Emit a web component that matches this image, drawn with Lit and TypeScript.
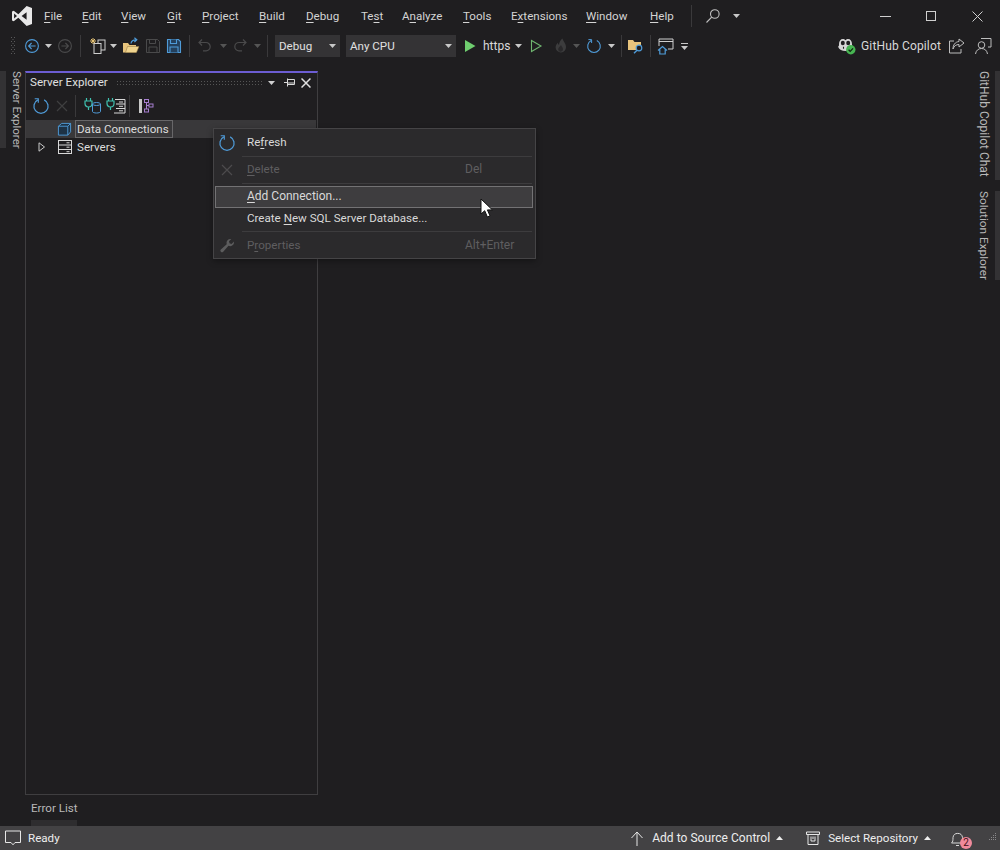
import { LitElement, html, svg, css } from "lit";
import { customElement } from "lit/decorators.js";

const refresh = (s = 18, c = "#4f9bd8") => html`<svg width=${s} height=${s} viewBox="0 0 16 16" fill="none" stroke=${c} stroke-width="1.1"><path d="M5.2 2.6A6.3 6.3 0 1 0 10.8 2.6"/><path d="M2.4 1.6h3.2v3.4" stroke-width="1"/></svg>`;
const cross = (c: string) => html`<svg width="14" height="14" viewBox="0 0 14 14" fill="none" stroke=${c} stroke-width="1.2"><path d="M2 2l10 10M12 2L2 12"/></svg>`;
const caret = (c = "#c8c8c8") => html`<svg width="7" height="4" viewBox="0 0 7 4"><path d="M0 0h7L3.5 4z" fill=${c}/></svg>`;
const plug = svg`<g stroke="#3fc1b0" stroke-width="1.2" fill="none"><path d="M2.500 1v3M6.500 1v3M1 4h7v2.500a3.500 3.500 0 0 1-7 0zM4.500 10v3"/></g>`;

const back = html`<svg width="16" height="16" viewBox="0 0 16 16" fill="none" stroke="#4f9bd8" stroke-width="1.1"><circle cx="8" cy="8" r="6.4"/><path d="M11.6 8H4.8M7.6 5 4.6 8l3 3"/></svg>`;
const fwd = html`<svg width="16" height="16" viewBox="0 0 16 16" fill="none" stroke="#4a4a4b" stroke-width="1.1"><circle cx="8" cy="8" r="6.4"/><path d="M4.4 8h6.8M8.4 5l3 3-3 3"/></svg>`;
const newProj = html`<svg width="18" height="18" viewBox="0 0 18 18" fill="none"><path d="M4 1v6M1 4h6M2 2l4 4M6 2 2 6" stroke="#e5c274" stroke-width="1"/><rect x="9" y="3" width="7" height="10" stroke="#cfcfcf" fill="#1f1e20"/><rect x="5" y="6.5" width="7" height="10" stroke="#cfcfcf" fill="#1f1e20"/></svg>`;
const openF = html`<svg width="18" height="18" viewBox="0 0 18 18"><path d="M1 6h5l1.5 2H14v7.5H1z" fill="#e8c47c"/><path d="M3.5 15.5 5.5 9.500H17l-2.500 6z" fill="#f0d48e" stroke="#8b7340" stroke-width=".5"/><path d="M9 6.500c.3-2.500 2.300-3.600 5-3.600M12.400 .8l2.400 2-2.400 2.200" fill="none" stroke="#4f9bd8" stroke-width="1.200"/></svg>`;
const save = (c: string) => html`<svg width="16" height="16" viewBox="0 0 16 16" fill="none" stroke=${c} stroke-width="1"><path d="M1.500 1.500h11l2 2v11h-13z"/><path d="M4.500 1.500v4h6v-4M4 14.500V9h8v5.500"/></svg>`;
const saveAll = html`<svg width="16" height="16" viewBox="0 0 16 16" fill="#24405c" stroke="#4f9bd8" stroke-width="1.100"><path d="M1.500 1.500h11l2 2v11h-13z"/><path d="M4.500 1.500v4h6v-4M4 14.500V9h8v5.500"/></svg>`;
const undo = html`<svg width="16" height="16" viewBox="0 0 16 16" fill="none" stroke="#4a4a4b" stroke-width="1.200"><path d="M5 1.500 2 4.500l3 3M2 4.500h7a4.200 4.200 0 0 1 0 8.400H6"/></svg>`;
const redo = html`<svg width="16" height="16" viewBox="0 0 16 16" fill="none" stroke="#4a4a4b" stroke-width="1.200"><path d="m11 1.500 3 3-3 3M14 4.500H7a4.200 4.200 0 0 0 0 8.400h3"/></svg>`;
const play = html`<svg width="14" height="14" viewBox="0 0 14 14"><path d="M2 1v12l10.500-6z" fill="#6fce6f"/></svg>`;
const playO = html`<svg width="14" height="14" viewBox="0 0 14 14"><path d="M2.500 1.500v11l9.500-5.500z" fill="none" stroke="#6fb56f" stroke-width="1.100"/></svg>`;
const flame = html`<svg width="16" height="16" viewBox="0 0 16 16"><path d="M9.500.5c.6 3 3.500 4.600 3.500 8.500a5.200 5.200 0 0 1-10.400.5c0-2.200 1.200-3.500 2.200-4.700.2 1 .5 1.700 1.200 2.200C6 4.500 7.400 2 9.500.5z" fill="#3c3c3d"/><path d="M8 7c.4 1.500 2 2.400 2 4.200a2.400 2.400 0 0 1-4.800.2c0-1.200.8-2 1.400-2.600C7 8.200 7.500 7.600 8 7z" fill="#29282a"/></svg>`;
const folderFind = html`<svg width="18" height="18" viewBox="0 0 18 18"><path d="M1 3h5l1.500 2H14v8H1z" fill="#e8c47c"/><circle cx="12" cy="11" r="2.800" fill="#1f1e20" stroke="#4f9bd8" stroke-width="1.200"/><path d="m10 13.200-3 3" stroke="#4f9bd8" stroke-width="1.500"/></svg>`;
const winHome = html`<svg width="18" height="18" viewBox="0 0 18 18" fill="none"><path d="M2 9V2h14v10h-5M2 4.500h14" stroke="#cfcfcf"/><path d="M1 13.500 5.500 9.500l4.500 4M2.800 12.500v4.500h5.400v-4.500" stroke="#4f9bd8" stroke-width="1.200"/></svg>`;
const copilot = html`<svg width="18" height="18" viewBox="0 0 18 18"><path d="M1 7c0-3 1.700-5 3.800-5 1.200 0 1.900.5 2.700 1.200C8.300 2.500 9 2 10.200 2 12.300 2 14 4 14 7v1.500c.6.500.8 1 .8 1.500-1 2.400-3.800 4-7.300 4S1.200 12.400.2 10c0-.5.2-1 .8-1.500z" fill="#d6d6d6"/><ellipse cx="4.800" cy="6" rx="2" ry="2.300" fill="#1f1e20"/><ellipse cx="10.200" cy="6" rx="2" ry="2.300" fill="#1f1e20"/><path d="M5.500 9.800v2M9.500 9.800v2" stroke="#1f1e20" stroke-width="1.100"/><circle cx="12.800" cy="12.800" r="4.700" fill="#47b552"/><path d="m10.600 12.800 1.600 1.600 2.800-3" fill="none" stroke="#10280f" stroke-width="1.300"/></svg>`;
const share = html`<svg width="18" height="18" viewBox="0 0 18 18" fill="none" stroke="#bdbdbd" stroke-width="1"><path d="M6 4H1.500v12H13v-4"/><path d="M11 2l5 4-5 4V7.500C8 7.500 6 9 5 12c0-4 2-7 6-7.500z"/></svg>`;
const feedback = html`<svg width="18" height="18" viewBox="0 0 18 18" fill="none" stroke="#bdbdbd" stroke-width="1"><path d="M7 1.500h10V10h-3"/><circle cx="7.500" cy="8" r="3.300"/><path d="M1.500 17c.5-3.500 2.800-5.500 6-5.500s5.500 2 6 5.500"/></svg>`;
const search = html`<svg width="16" height="16" viewBox="0 0 16 16" fill="none" stroke="#c0c0c0" stroke-width="1.100"><circle cx="9.800" cy="6" r="4.300"/><path d="M6.700 9.200 1.500 14.500"/></svg>`;
const pin = html`<svg width="11" height="9" viewBox="0 0 11 9" fill="none" stroke="#d8d8d8" stroke-width="1"><path d="M0 4.500h3.500M3.500.5v8M3.500 1.500h7v5h-7M3.500 5h7"/></svg>`;
const addData = html`<svg width="18" height="18" viewBox="0 0 18 18">${plug}<g fill="none" stroke="#4f9bd8" stroke-width="1"><ellipse cx="12.500" cy="7" rx="4" ry="1.500"/><path d="M8.500 7v7.500c0 .9 1.800 1.500 4 1.500s4-.6 4-1.500V7"/></g></svg>`;
const addServer = html`<svg width="20" height="18" viewBox="0 0 20 18">${plug}<g fill="none" stroke="#d8d8d8" stroke-width="1"><path d="M9 2.500h10v13.500H8M10 7h9M10 11.500h9"/><path d="M13 5h4M13 9.300h4M13 13.800h4"/></g></svg>`;
const hierarchy = html`<svg width="16" height="16" viewBox="0 0 16 16"><rect x="1" y="1" width="3" height="14" fill="#c8c8c8"/><g fill="none" stroke="#a77fd0" stroke-width="1"><rect x="6.500" y="1.500" width="4" height="3"/><rect x="11" y="6" width="4" height="3"/><rect x="6.500" y="11" width="4" height="3"/><path d="M8.500 4.500V11M8.500 7.500H11"/></g></svg>`;
const dbIcon = html`<svg width="15" height="15" viewBox="0 0 16 16" fill="#1d3245" stroke="#4f9bd8" stroke-width="1"><path d="M1.500 4.500 5 1.500h9.500v9l-3 3.500h-10z"/><path d="M1.500 4.500h10V14M11.500 4.500l3-3" fill="none"/></svg>`;
const serverIcon = html`<svg width="14" height="14" viewBox="0 0 14 14" fill="none" stroke="#d8d8d8" stroke-width="1"><rect x=".5" y=".5" width="13" height="13"/><path d="M.5 5h13M.5 9.500h13M8.500 2.800h3M8.500 7.200h3M8.500 11.700h3"/></svg>`;
const expander = html`<svg width="8" height="10" viewBox="0 0 8 10"><path d="M1 .8v8.400L6.500 5z" fill="none" stroke="#c8c8c8"/></svg>`;
const wrench = html`<svg width="16" height="16" viewBox="0 0 16 16"><path d="M15 3.500a4 4 0 0 1-5.500 4.300L4 14a1.700 1.700 0 0 1-2.400-2.300L7.700 6.200A4 4 0 0 1 12.300 1L10 3.300l.5 2 2 .6z" fill="#5c5c5d"/></svg>`;
const bubble = html`<svg width="16" height="16" viewBox="0 0 16 16" fill="none" stroke="#e6e6e6" stroke-width="1"><path d="M.5 1h15v11.500H10L8 14.800 6 12.500H.5z"/></svg>`;
const up = html`<svg width="14" height="15" viewBox="0 0 14 15" fill="none" stroke="#e6e6e6" stroke-width="1"><path d="M7 1v14M1.500 7 7 1l5.500 6"/></svg>`;
const repo = html`<svg width="14" height="14" viewBox="0 0 14 14" fill="none" stroke="#e6e6e6" stroke-width="1"><path d="M.5 1h13v2.500H.5zM2 3.500v10h10v-10M5 5.500v4.500h4V5.500M7 5.500V8"/></svg>`;
const bell = html`<svg width="16" height="17" viewBox="0 0 16 17" fill="none" stroke="#d8d8d8" stroke-width="1"><path d="M1.500 13c1.500-1 1.500-3 1.500-5.500a4.800 4.800 0 0 1 9.500 0c0 2.500 0 4.500 1.500 5.500zM6 15.500h3"/></svg>`;
const cursor = html`<svg width="14" height="20" viewBox="0 0 14 20"><path d="M1 1v15l3.700-3.300L7.400 19l2.600-1.200-2.600-5.900h5z" fill="#fff" stroke="#111" stroke-width="1"/></svg>`;
const gripDots = html`<svg width="5" height="18" viewBox="0 0 5 18"><g fill="#5a5a5b"><rect y="0" width="1" height="1"/><rect x="3" y="0" width="1" height="1"/><rect x="1.500" y="2" width="1" height="1"/><rect y="4" width="1" height="1"/><rect x="3" y="4" width="1" height="1"/><rect x="1.500" y="6" width="1" height="1"/><rect y="8" width="1" height="1"/><rect x="3" y="8" width="1" height="1"/><rect x="1.500" y="10" width="1" height="1"/><rect y="12" width="1" height="1"/><rect x="3" y="12" width="1" height="1"/><rect x="1.500" y="14" width="1" height="1"/><rect y="16" width="1" height="1"/><rect x="3" y="16" width="1" height="1"/></g></svg>`;
const sizer = html`<svg width="10" height="10" viewBox="0 0 10 10"><g fill="#8a898b"><rect x="8" y="0" width="1" height="1"/><rect x="6" y="2" width="1" height="1"/><rect x="8" y="2" width="1" height="1"/><rect x="4" y="4" width="1" height="1"/><rect x="6" y="4" width="1" height="1"/><rect x="8" y="4" width="1" height="1"/><rect x="2" y="6" width="1" height="1"/><rect x="4" y="6" width="1" height="1"/><rect x="6" y="6" width="1" height="1"/><rect x="8" y="6" width="1" height="1"/></g></svg>`;

const menus: [string, string, string][] = [
  ["", "F", "ile"], ["", "E", "dit"], ["", "V", "iew"], ["", "G", "it"], ["", "P", "roject"], ["", "B", "uild"], ["", "D", "ebug"],
  ["Te", "s", "t"], ["A", "n", "alyze"], ["", "T", "ools"], ["E", "x", "tensions"], ["", "W", "indow"], ["", "H", "elp"],
];

@customElement("app-root")
export class AppRoot extends LitElement {
  static styles = css`
    :host { display: block; position: relative; width: 1000px; height: 850px; overflow: hidden; background: #1f1e20; color: #d9d9d9;
      font: 11.6px/16px Roboto, sans-serif; white-space: nowrap; }
    * { box-sizing: border-box; }
    svg { display: block; flex: none; }
    u { text-underline-offset: 2px; text-decoration-thickness: 1px; }
    .frame { display: flex; flex-direction: column; height: 850px; }

    .title { display: flex; align-items: center; height: 32px; flex: none; }
    .logo { width: 44px; padding-left: 12px; }
    .menus { display: grid; grid-template-columns: 38px 39px 46px 35px 57px 47px 55px 41px 61px 48px 75px 64px 26px; color: #d4d4d4; }
    .tsep { width: 1px; height: 22px; background: #3a393b; margin: 0 11px 0 15px; }
    .win { margin-left: auto; display: flex; }
    .win div { width: 46px; height: 32px; display: flex; align-items: center; justify-content: center; }

    .tools { display: flex; align-items: center; height: 28px; flex: none; padding-left: 11px; }
    .ib { width: 20px; height: 22px; display: flex; align-items: center; justify-content: center; }
    .cr { width: 10px; height: 22px; display: flex; align-items: center; justify-content: center; }
    .sep { width: 1px; height: 22px; background: #3a393b; }
    .combo { height: 22px; background: #343335; display: flex; align-items: center; justify-content: space-between; padding: 0 4px; color: #e0e0e0; }
    .c1 { width: 65px; } .c2 { width: 110px; }
    .https { width: 28px; font-size: 12px; }
    .m1 { margin-left: 1px; } .m2 { margin-left: 2px; } .m3 { margin-left: 3px; } .m4 { margin-left: 4px; } .m5 { margin-left: 5px; } .m6 { margin-left: 6px; } .m7 { margin-left: 7px; } .m8 { margin-left: 8px; }
    .right { margin-left: auto; display: flex; align-items: center; color: #d9d9d9; padding-right: 7px; }
    .right .t { margin: 0 6px 0 5px; font-size: 12px; letter-spacing: .15px; }

    .body { flex: 1; display: flex; min-height: 0; padding-top: 11px; }
    .lrail { width: 25px; flex: none; display: flex; align-items: flex-start; }
    .strip { width: 6px; background: #333234; }
    .vt { writing-mode: vertical-rl; color: #b8b8b8; line-height: 14px; white-space: nowrap; }
    .lrail .strip { height: 77px; }
    .lrail .vt { margin-left: 4px; height: 77px; }
    .lcol { width: 293px; flex: none; display: flex; flex-direction: column; }
    .panel { height: 724px; border: 1px solid #3f3e40; border-top: 2px solid #6c5dd3; display: flex; flex-direction: column; }
    .ptitle { height: 19px; display: flex; align-items: center; padding: 0 3px 0 4px; color: #e0e0e0; flex: none; }
    .ptitle span { padding-bottom: 2px; }
    .dots { flex: 1; height: 5px; margin: 0 0 0 8px; background-image: radial-gradient(#555 .6px, transparent .7px); background-size: 3px 3px; }
    .ptitle .ic { display: flex; align-items: center; justify-content: center; }
    .w18 { width: 18px; } .w16 { width: 16px; }
    .ptools { height: 28px; display: flex; align-items: center; padding: 0 0 1px 4px; flex: none; }
    .ptools .ib { width: 21px; }
    .row { height: 18px; display: flex; align-items: center; flex: none; color: #dcdcdc; }
    .row.sel { background: #39383a; margin-right: 1px; }
    .exp { width: 29px; padding-left: 12px; }
    .tic { width: 20px; display: flex; justify-content: center; }
    .tic.d { justify-content: flex-start; padding-left: 2px; }
    .box { border: 1px solid #686769; height: 18px; padding: 0 1px; display: flex; align-items: center; width: 98px; }
    .row .nm { padding-left: 2px; }
    .tabs { padding-left: 6px; flex: 1; display: flex; flex-direction: column; justify-content: flex-end; }
    .tab { width: 46px; color: #b8b8b8; white-space: nowrap; }
    .tab .txt { height: 24px; display: flex; align-items: center; }
    .tab .bar { height: 6px; background: #2e2d2f; }
    .doc { flex: 1; }
    .rrail { width: 23px; flex: none; display: flex; flex-direction: column; gap: 11px; align-items: stretch; font-size: 12px; }
    .rt { display: flex; justify-content: space-between; }
    .rt .strip { width: 5px; }
    .h1 { height: 109px; } .h2 { height: 89px; font-size: 11.8px; }

    .status { height: 24px; flex: none; background: #434244; display: flex; align-items: center; color: #eee; padding-left: 5px; }
    .status .rg { margin-left: auto; display: flex; align-items: center; padding-right: 3px; }
    .st { margin-left: 7px; }
    .st.a { margin-left: 8px; font-size: 12px; letter-spacing: .05px; }
    .st.b { margin-left: 8px; }
    .sc { margin: 0 0 0 4px; }
    .s2 { margin-left: 22px; }
    .bellw { position: relative; margin-left: 18px; margin-right: 21px; }
    .badge { position: absolute; left: 10px; top: 7px; width: 12px; height: 12px; border-radius: 50%; background: #f08a9b; color: #401018; font-size: 10px; line-height: 12px; text-align: center; }

    .ctx { position: absolute; left: 213px; top: 128px; width: 323px; height: 131px; background: #2b2a2c; border: 1px solid #454446; padding: 2px 1px; box-shadow: 0 2px 6px rgba(0,0,0,.35); }
    .mi { display: flex; align-items: center; height: 24px; position: relative; }
    .mi .mic { width: 32px; display: flex; justify-content: center; flex: none; padding-right: 8px; }
    .mi .lb { flex: 1; padding-bottom: 2px; }
    .mi .sh { width: 69px; flex: none; padding-bottom: 2px; font-size: 12px; }
    .dis { color: #5f5e60; }
    .msep { height: 1px; background: #3d3c3e; margin: 1px 2px 1px 27px; }
    .hl { height: 22px; background: #3e3d3f; border: 1px solid #737274; margin: 2px 1px 0 0; }
    .mi.hl .mic { width: 31px; }
    .mi.hl .lb { font-size: 12px; }
    .pl { height: 22px; }
    .mi.last { height: 25px; padding-top: 1px; }
    .cur { position: absolute; left: 480px; top: 198px; }
  `;

  render() {
    return html`<div class="frame">
      <div class="title">
        <div class="logo"><svg width="20" height="20" viewBox="0 0 24 24"><path d="M17.583.063l-10 9.750-5.500-4.250L0 6.563v10.875l2.083 1 5.500-4.250 10 9.750L24 21.500V2.500zM2.500 15V9l3.500 3zm15 1.500L11.500 12l6-4.500z" fill="#e8e8e8"/></svg></div>
        <div class="menus">${menus.map(([a, k, b]) => html`<span>${a}<u>${k}</u>${b}</span>`)}</div>
        <div class="tsep"></div>
        <div class="ib">${search}</div><div class="cr m8">${caret()}</div>
        <div class="win">
          <div><svg width="11" height="1"><rect width="11" height="1" fill="#cfcfcf"/></svg></div>
          <div><svg width="10" height="10" fill="none"><rect x=".5" y=".5" width="9" height="9" stroke="#cfcfcf"/></svg></div>
          <div><svg width="11" height="11" fill="none" stroke="#cfcfcf"><path d="M.5.5l10 10M10.500.5l-10 10"/></svg></div>
        </div>
      </div>
      <div class="tools">
        ${gripDots}
        <div class="ib m6">${back}</div><div class="cr m1">${caret()}</div><div class="ib m2">${fwd}</div>
        <div class="sep m5"></div>
        <div class="ib m7">${newProj}</div><div class="cr">${caret()}</div><div class="ib m3">${openF}</div><div class="ib m2">${save("#4a4a4b")}</div><div class="ib m1">${saveAll}</div>
        <div class="sep m5"></div>
        <div class="ib m5">${undo}</div><div class="cr m3">${caret("#555")}</div><div class="ib m2">${redo}</div><div class="cr m2">${caret("#555")}</div>
        <div class="sep m5"></div>
        <div class="combo c1 m7"><span>Debug</span>${caret()}</div><div class="combo c2 m6"><span>Any CPU</span>${caret()}</div>
        <div class="ib m4">${play}</div><div class="m3 https">https</div><div class="cr m2">${caret()}</div><div class="ib m3">${playO}</div>
        <div class="ib m5">${flame}</div><div class="cr">${caret("#555")}</div><div class="ib m3">${refresh(16)}</div><div class="cr m2">${caret()}</div>
        <div class="sep m5"></div>
        <div class="ib m4">${folderFind}</div>
        <div class="sep m4"></div>
        <div class="ib m5">${winHome}</div><div class="cr m3"><svg width="7" height="7" viewBox="0 0 7 7"><path d="M0 0h7v1H0zM0 3h7L3.500 7z" fill="#c8c8c8"/></svg></div>
        <div class="right">
          ${copilot}<span class="t">GitHub Copilot</span>
          <div class="ib">${share}</div><div class="ib m6">${feedback}</div>
        </div>
      </div>
      <div class="body">
        <div class="lrail"><div class="strip"></div><div class="vt">Server Explorer</div></div>
        <div class="lcol">
          <div class="panel">
            <div class="ptitle"><span>Server Explorer</span><div class="dots"></div>
              <div class="ic w18">${caret("#d0d0d0")}</div><div class="ic w18">${pin}</div><div class="ic w16"><svg width="10" height="10" fill="none" stroke="#e0e0e0" stroke-width="1.500"><path d="M.5.5l9 9M9.500.5l-9 9"/></svg></div>
            </div>
            <div class="ptools">
              <div class="ib">${refresh(18)}</div><div class="ib">${cross("#3f3f40")}</div>
              <div class="sep m3"></div>
              <div class="ib m6">${addData}</div><div class="ib m2">${addServer}</div>
              <div class="sep m3"></div>
              <div class="ib m5">${hierarchy}</div>
            </div>
            <div class="row sel"><div class="exp"></div><div class="tic d">${dbIcon}</div><div class="box">Data Connections</div></div>
            <div class="row"><div class="exp">${expander}</div><div class="tic">${serverIcon}</div><div class="nm">Servers</div></div>
          </div>
          <div class="tabs"><div class="tab"><div class="txt">Error List</div><div class="bar"></div></div></div>
        </div>
        <div class="doc"></div>
        <div class="rrail">
          <div class="rt h1"><div class="vt">GitHub Copilot Chat</div><div class="strip"></div></div>
          <div class="rt h2"><div class="vt">Solution Explorer</div><div class="strip"></div></div>
        </div>
      </div>
      <div class="status">
        ${bubble}<span class="st">Ready</span>
        <div class="rg">
          ${up}<span class="st a">Add to Source Control</span><div class="cr sc">${caretUp()}</div>
          <div class="s2">${repo}</div><span class="st b">Select Repository</span><div class="cr sc">${caretUp()}</div>
          <div class="bellw">${bell}<div class="badge">2</div></div>
          ${sizer}
        </div>
      </div>
    </div>
    <div class="ctx">
      <div class="mi"><div class="mic">${refresh(18)}</div><div class="lb">Re<u>f</u>resh</div></div>
      <div class="msep"></div>
      <div class="mi dis"><div class="mic">${cross("#4c4b4d")}</div><div class="lb"><u>D</u>elete</div><div class="sh">Del</div></div>
      <div class="msep"></div>
      <div class="mi hl"><div class="mic"></div><div class="lb"><u>A</u>dd Connection...</div></div>
      <div class="mi pl"><div class="mic"></div><div class="lb">Create <u>N</u>ew SQL Server Database...</div></div>
      <div class="msep"></div>
      <div class="mi dis last"><div class="mic">${wrench}</div><div class="lb">P<u>r</u>operties</div><div class="sh">Alt+Enter</div></div>
    </div>
    <div class="cur">${cursor}</div>`;
  }
}

function caretUp() {
  return html`<svg width="7" height="4" viewBox="0 0 7 4"><path d="M0 4h7L3.500 0z" fill="#eee"/></svg>`;
}
